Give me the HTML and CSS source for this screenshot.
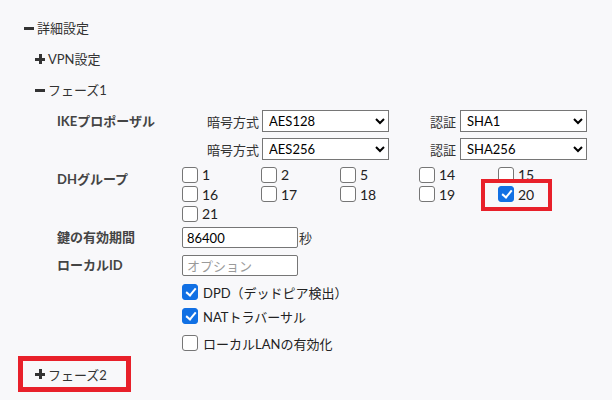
FILE: index.html
```html
<!DOCTYPE html>
<html lang="ja">
<head>
    <meta charset="UTF-8" />
    <title>詳細設定</title>
    <link rel="stylesheet" href="styles.css">
</head>
<body>
    <div class="page">
        <div class="node">
            <span class="toggle minus"></span>
            <span>詳細設定</span>
        </div>

        <div class="children">
            <div class="node">
                <span class="toggle plus"></span>
                <span>VPN設定</span>
            </div>

            <div class="node">
                <span class="toggle minus"></span>
                <span>フェーズ1</span>
            </div>

            <div class="form">
                <div class="row row-ike">
                    <div class="label">IKEプロポーザル</div>
                    <div class="proposals">
                        <div class="proposal">
                            <span class="field-name">暗号方式</span>
                            <select class="select"><option>AES128</option></select>
                            <span class="field-name auth">認証</span>
                            <select class="select"><option>SHA1</option></select>
                        </div>
                        <div class="proposal">
                            <span class="field-name">暗号方式</span>
                            <select class="select"><option>AES256</option></select>
                            <span class="field-name auth">認証</span>
                            <select class="select"><option>SHA256</option></select>
                        </div>
                    </div>
                </div>

                <div class="row row-dh">
                    <div class="label label-dh">DHグループ</div>
                    <div class="dh-grid">
                        <label class="dh-item"><input type="checkbox"><span>1</span></label>
                        <label class="dh-item"><input type="checkbox"><span>2</span></label>
                        <label class="dh-item"><input type="checkbox"><span>5</span></label>
                        <label class="dh-item"><input type="checkbox"><span>14</span></label>
                        <label class="dh-item"><input type="checkbox"><span>15</span></label>
                        <label class="dh-item"><input type="checkbox"><span>16</span></label>
                        <label class="dh-item"><input type="checkbox"><span>17</span></label>
                        <label class="dh-item"><input type="checkbox"><span>18</span></label>
                        <label class="dh-item"><input type="checkbox"><span>19</span></label>
                        <label class="dh-item marked"><input type="checkbox" checked><span>20</span><span class="mark"></span></label>
                        <label class="dh-item"><input type="checkbox"><span>21</span></label>
                    </div>
                </div>

                <div class="row row-key">
                    <div class="label">鍵の有効期間</div>
                    <div class="inline">
                        <input class="text" type="text" value="86400">
                        <span class="unit">秒</span>
                    </div>
                </div>

                <div class="row row-id">
                    <div class="label">ローカルID</div>
                    <input class="text" type="text" placeholder="オプション">
                </div>

                <div class="row row-check first">
                    <div class="label"></div>
                    <label class="option"><input type="checkbox" checked><span>DPD（デッドピア検出）</span></label>
                </div>
                <div class="row row-check">
                    <div class="label"></div>
                    <label class="option"><input type="checkbox" checked><span>NATトラバーサル</span></label>
                </div>
                <div class="row row-check last">
                    <div class="label"></div>
                    <label class="option"><input type="checkbox"><span>ローカルLANの有効化</span></label>
                </div>
            </div>
        </div>

        <div class="highlight">
            <div class="node">
                <span class="toggle plus"></span>
                <span>フェーズ2</span>
            </div>
        </div>
    </div>
</body>
</html>
```

FILE: styles.css
```css
:root {
    --background-color: #f8f8fa;
    --text-color: #333;
    --label-color: #444;
    --border-color: #767676;
    --check-color: #1170e4;
    --mark-color: #e8202a;
}

body {
    margin: 0;
    background-color: var(--background-color);
    color: var(--text-color);
    font-family: Lato, "Noto Sans CJK JP", sans-serif;
    font-size: 13px;
}

.page {
    padding: 12px 0 0 24px;
}

.node {
    display: flex;
    align-items: center;
    gap: 3px;
    height: 31px;
}

.children {
    padding-left: 11px;
}

.toggle {
    position: relative;
    width: 10px;
    height: 10px;
    flex-shrink: 0;
}

.toggle::before,
.toggle::after {
    content: "";
    position: absolute;
    background-color: #333;
}

.toggle::before {
    left: 0;
    top: 4px;
    width: 10px;
    height: 3px;
}

.plus::after {
    left: 4px;
    top: 0;
    width: 3px;
    height: 10px;
}

.form {
    padding-left: 22px;
    margin-top: 5px;
}

.row {
    display: flex;
    align-items: flex-start;
}

.label {
    width: 125px;
    flex-shrink: 0;
    font-weight: 700;
    color: var(--label-color);
    line-height: 22px;
}

.proposals {
    display: flex;
    flex-direction: column;
    gap: 6px;
    padding-left: 25px;
}

.proposal {
    display: flex;
    align-items: center;
}

.field-name {
    margin-right: 3px;
}

.field-name.auth {
    margin-left: 41px;
    margin-right: 4px;
}

.select {
    width: 127px;
    height: 22px;
    margin: 0;
    padding: 0 2px;
    border: 1px solid var(--border-color);
    border-radius: 0;
    background-color: #fff;
    color: #000;
    font-family: Lato, "Noto Sans CJK JP", sans-serif;
    font-size: 13px;
}

.row-dh {
    margin-top: 5px;
}

.label-dh {
    padding-top: 5px;
    line-height: 19.5px;
}

.dh-grid {
    display: grid;
    grid-template-columns: repeat(5, 79px);
    grid-auto-rows: 19.5px;
}

.dh-item {
    position: relative;
    display: flex;
    align-items: center;
    gap: 4px;
    color: #222;
    font-size: 14px;
}

input[type="checkbox"] {
    appearance: none;
    position: relative;
    width: 16px;
    height: 16px;
    box-sizing: border-box;
    margin: 0;
    flex-shrink: 0;
    border: 1px solid var(--border-color);
    border-radius: 3px;
    background-color: #fff;
}

input[type="checkbox"]:checked {
    border-color: var(--check-color);
    background-color: var(--check-color);
}

input[type="checkbox"]:checked::after {
    content: "";
    position: absolute;
    left: 4.5px;
    top: 1px;
    width: 4px;
    height: 8px;
    border: solid #fff;
    border-width: 0 2.5px 2.5px 0;
    transform: rotate(40deg);
}

.mark {
    position: absolute;
    left: -17px;
    top: -6px;
    width: 71px;
    height: 32px;
    box-sizing: border-box;
    border: 4px solid var(--mark-color);
}

.row-key {
    margin-top: 3.5px;
    align-items: center;
}

.row-key .label,
.row-id .label {
    line-height: 21px;
}

.inline {
    display: flex;
    align-items: center;
}

.text {
    width: 116px;
    height: 21px;
    box-sizing: border-box;
    margin: 0;
    padding: 0 4px;
    border: 1px solid var(--border-color);
    border-radius: 2px;
    background-color: #fff;
    color: #000;
    font-family: Lato, "Noto Sans CJK JP", sans-serif;
    font-size: 13px;
}

.text::placeholder {
    color: #9a9a9a;
}

.unit {
    margin-left: 1px;
}

.row-id {
    margin-top: 7px;
}

.row-check {
    align-items: center;
    height: 24px;
}

.row-check.first {
    margin-top: 4px;
}

.row-check.last {
    margin-top: 3px;
}

.option {
    display: flex;
    align-items: center;
    gap: 5px;
    color: #222;
}

.highlight {
    display: inline-block;
    margin: 1px 0 0 -6px;
    padding: 0 19px 0 12px;
    border: 5px solid var(--mark-color);
}

.highlight .node {
    height: 26px;
}
```
